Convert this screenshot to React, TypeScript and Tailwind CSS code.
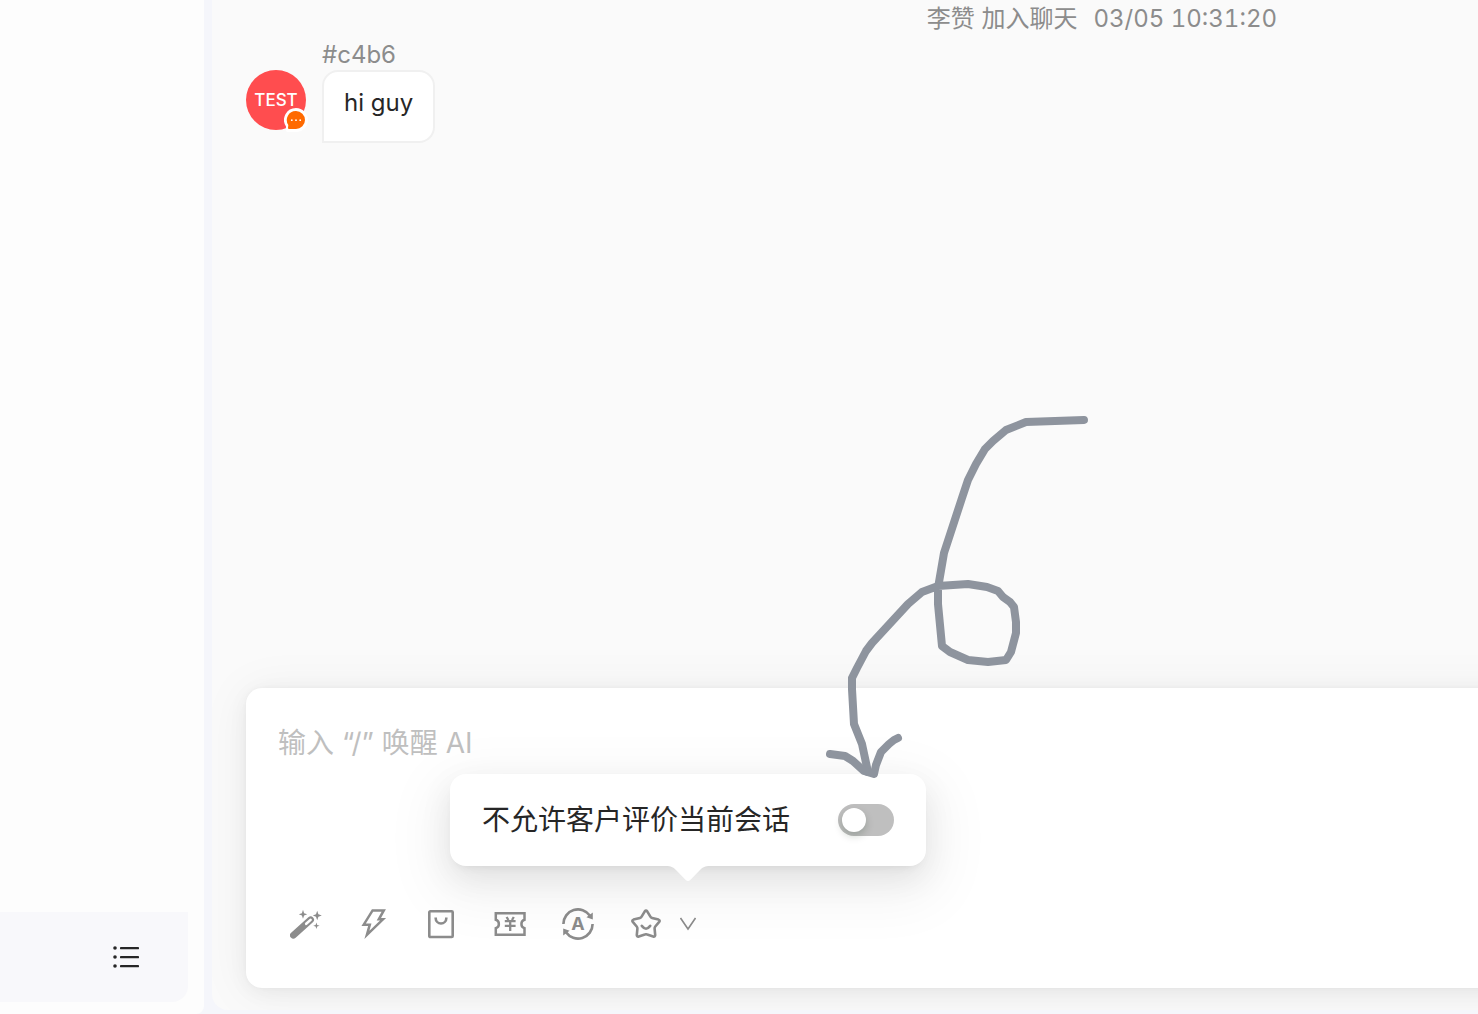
import { useState, type ReactNode } from "react";

interface IconProps {
  className?: string;
}

export default function App() {
  return (
    <div className="flex min-h-screen overflow-hidden bg-[#f5f6fb] font-['Inter','Noto_Sans_CJK_SC',sans-serif]">
      <Sidebar />
      <main className="relative mb-1 ml-2 flex min-w-0 flex-1 flex-col overflow-hidden rounded-bl-2xl bg-[#fafafa] pb-[22px] pl-[34px]">
        <SystemNotice text="李赞 加入聊天" time="03/05 10:31:20" />
        <Message author="#c4b6" avatar="TEST" text="hi guy" />
        <Composer />
      </main>
    </div>
  );
}

function Sidebar() {
  return (
    <aside className="flex w-[204px] shrink-0 flex-col justify-end rounded-br-lg bg-[#fdfdfd] pr-4 pb-3">
      <div className="flex h-[90px] items-center justify-end rounded-br-2xl bg-[#f8f8fb] pr-12">
        <button type="button" aria-label="List">
          <ListIcon />
        </button>
      </div>
    </aside>
  );
}

function SystemNotice({ text, time }: { text: string; time: string }) {
  return (
    <p className="flex justify-end gap-4 pr-[201px] text-2xl leading-[38px] text-[#8c8c8c]">
      <span>{text}</span>
      <time className="tabular-nums">{time}</time>
    </p>
  );
}

function Message({ author, avatar, text }: { author: string; avatar: string; text: string }) {
  return (
    <article className="flex items-start gap-4 pt-0.5">
      <div className="relative mt-[30px] flex size-[60px] shrink-0 items-center justify-center rounded-full bg-[#ff4d4f] pt-0.5 text-[17px] font-medium text-white">
        {avatar}
        <ChannelBadge className="absolute -right-0.5 -bottom-0.5" />
      </div>
      <div>
        <p className="text-2xl leading-[30px] text-[#8c8c8c]">{author}</p>
        <div className="w-fit rounded-2xl rounded-bl-none border-2 border-[#f0f0f0] bg-white px-5 pt-[14px] pb-[22px] text-2xl leading-[33px] text-[#262626]">
          {text}
        </div>
      </div>
    </article>
  );
}

function Composer() {
  return (
    <section className="mt-auto -mr-12 flex h-[300px] flex-col rounded-2xl bg-white px-8 pt-8 pb-12 shadow-[0_0_4px_0_rgba(0,0,0,0.03),0_4px_20px_0_rgba(0,0,0,0.05),0_4px_48px_4px_rgba(0,0,0,0.05)]">
      <textarea
        aria-label="消息"
        placeholder="输入 “/” 唤醒 AI"
        className="min-h-0 flex-1 resize-none bg-transparent text-[28px] leading-[46px] outline-none placeholder:text-[#bfbfbf]"
      />
      <div className="flex items-center gap-9 pl-3 text-[#8c8c8c]">
        <Tool label="AI"><WandIcon /></Tool>
        <Tool label="快捷回复"><BoltIcon /></Tool>
        <Tool label="商品"><BagIcon /></Tool>
        <Tool label="优惠券"><CouponIcon /></Tool>
        <Tool label="翻译"><TranslateIcon /></Tool>
        <div className="flex items-center gap-[18px]">
          <Tool label="评价"><StarIcon /></Tool>
          <div className="relative">
            <Tool label="展开"><ChevronIcon /></Tool>
            <RatingPopover />
          </div>
        </div>
      </div>
    </section>
  );
}

function Tool({ label, children }: { label: string; children: ReactNode }) {
  return (
    <button type="button" aria-label={label} className="block">
      {children}
    </button>
  );
}

function RatingPopover() {
  const [blocked, setBlocked] = useState(false);

  return (
    <div className="absolute bottom-[74px] left-1/2 -translate-x-1/2">
      <label className="flex h-[92px] items-center gap-12 rounded-2xl bg-white px-8 text-[28px] whitespace-nowrap text-[#262626] shadow-[0_6px_12px_-8px_rgba(0,0,0,0.12),0_12px_32px_0_rgba(0,0,0,0.08),0_18px_56px_16px_rgba(0,0,0,0.05)]">
        不允许客户评价当前会话
        <input
          type="checkbox"
          role="switch"
          checked={blocked}
          onChange={(e) => setBlocked(e.target.checked)}
          className="h-8 w-14 shrink-0 appearance-none rounded-full bg-[#bfbfbf] p-1 before:block before:size-6 before:rounded-full before:bg-white before:shadow-[0_4px_8px_rgba(0,35,11,0.2)] before:transition-transform checked:bg-[#1890ff] checked:before:translate-x-6"
        />
      </label>
      <svg width="44" height="16" viewBox="0 0 44 16" className="absolute top-full left-1/2 -translate-x-1/2" fill="#fff">
        <path d="M0 0C5 0 7 1 10 4L19.5 13.8Q22 16.4 24.5 13.8L34 4C37 1 39 0 44 0Z" />
      </svg>
      <PenArrow className="pointer-events-none absolute -right-[166px] bottom-[84px]" />
    </div>
  );
}

/** Freehand looped arrow that points at the switch. */
function PenArrow({ className }: IconProps) {
  return (
    <svg
      width="270"
      height="370"
      viewBox="822 412 270 370"
      className={className}
      fill="none"
      stroke="#8e949e"
      strokeWidth="8"
      strokeLinecap="round"
      strokeLinejoin="round"
    >
      <path d="M1084 420L1026 422L1006 430L993 441L985 449L976 464L968 480L962 498L944 553L938 588L938 604L942 646L950 652L968 660L988 662L1006 660L1011 652L1016 633L1016 622L1014 607L1010 602L1003 597L998 591L987 587L968 584L938 586L922 592L908 604L872 643L866 651L857 668L852 678L852 689L854 724L862 744L868 772" />
      <path d="M830 754L845 756L853 761L864 771L874 774L876 765L881 752L889 744L894 740L898 738" />
    </svg>
  );
}

function ListIcon() {
  return (
    <svg width="28" height="24" viewBox="0 0 28 24" fill="#262626" className="block">
      {[3, 12, 21].map((y) => (
        <g key={y}>
          <circle cx="3" cy={y} r="1.8" />
          <rect x="8" y={y - 1} width="19" height="2.2" rx="0.4" />
        </g>
      ))}
    </svg>
  );
}

function ChannelBadge({ className }: IconProps) {
  return (
    <svg width="24" height="24" viewBox="0 0 24 24" className={className}>
      <path d="M12 0A12 12 0 1 1 12 24H4Q1.5 24 1.8 21.5L2 18.6A12 12 0 0 1 12 0Z" fill="#fff" />
      <path d="M12 3A9 9 0 1 1 12 21H5Q4 21 4 20L4.3 17A9 9 0 0 1 12 3Z" fill="#ff6a00" />
      <g fill="#fff">
        <circle cx="7.8" cy="12.2" r="0.9" />
        <circle cx="12" cy="12.2" r="0.9" />
        <circle cx="16.2" cy="12.2" r="0.9" />
      </g>
    </svg>
  );
}

function WandIcon() {
  return (
    <svg width="32" height="32" viewBox="0 0 32 32" fill="currentColor">
      <path d="M3.4 27.2L20.6 11.8" stroke="currentColor" strokeWidth="6.8" strokeLinecap="round" />
      <path d="M16.2 15.8L20.6 11.9" stroke="#fff" strokeWidth="2.6" strokeLinecap="round" />
      <path d="M13 1.8L14.1 5.2L17.2 6.3L14.1 7.4L13 10.8L11.9 7.4L8.8 6.3L11.9 5.2Z" />
      <path d="M27.2 2.7L28.4 6.3L31.8 7.5L28.4 8.7L27.2 12.3L26 8.7L22.8 7.5L26 6.3Z" />
      <path d="M26.4 14.4L27.2 16.9L29.6 17.7L27.2 18.5L26.4 21L25.6 18.5L23.2 17.7L25.6 16.9Z" />
    </svg>
  );
}

function BoltIcon() {
  return (
    <svg width="32" height="32" viewBox="0 0 32 32" fill="none" stroke="currentColor" strokeWidth="2.5">
      <path d="M14.6 2.4H25.8L20.8 11.3H25L8.9 26.8L11.8 16.7H5.7Z" />
    </svg>
  );
}

function BagIcon() {
  return (
    <svg width="32" height="32" viewBox="0 0 32 32" fill="none" stroke="currentColor" strokeWidth="2.6">
      <rect x="3.3" y="3.3" width="23.4" height="25.7" rx="1" />
      <path d="M9.7 9.6V10.2A5.3 5.3 0 0 0 20.3 10.2V9.6" />
    </svg>
  );
}

function CouponIcon() {
  return (
    <svg width="32" height="32" viewBox="0 0 32 32" fill="none" stroke="currentColor" strokeWidth="2.5">
      <path d="M1.8 5.3H30.5V11.8C26.4 13 26.4 19 30.5 20.2V26.7H1.8V20.2C5.9 19 5.9 13 1.8 11.8V5.3Z" />
      <path d="M12.6 9L14.4 12M19.8 9L18 12M10.8 13.2H21.6M10.8 17.8H21.6M16.2 13V23" strokeWidth="2.3" />
    </svg>
  );
}

function TranslateIcon() {
  return (
    <svg width="32" height="32" viewBox="0 0 32 32" fill="none" stroke="currentColor" strokeWidth="2.6">
      <path d="M1.4 16A14.6 14.6 0 0 1 28 7.7" />
      <path d="M30.6 16A14.6 14.6 0 0 1 4 24.3" />
      <path d="M30.8 4.5V11.6L24.4 9.2ZM1.2 27.5V20.4L7.6 22.8Z" fill="currentColor" stroke="none" />
      <text x="16" y="22" textAnchor="middle" fontSize="18" fontWeight="700" fill="currentColor" stroke="none">
        A
      </text>
    </svg>
  );
}

function StarIcon() {
  return (
    <svg width="32" height="32" viewBox="0 0 32 32" fill="none" stroke="currentColor" strokeWidth="2.6" strokeLinejoin="round" strokeLinecap="round">
      <path d="M14.8 3.4Q16 1.8 17.2 3.4L20.4 8.6Q21 9.6 22.1 9.9L28.5 11.6Q30.4 12.3 29.2 13.9L25.3 18.5Q24.5 19.5 24.6 20.7L25.2 27.2Q25 29.2 23.2 28.6L17.2 26.5Q16 26 14.8 26.5L8.8 28.6Q7 29.2 6.8 27.2L7.4 20.7Q7.5 19.5 6.7 18.5L2.8 13.9Q1.6 12.3 3.5 11.6L9.9 9.9Q11 9.6 11.6 8.6Z" />
      <path d="M11.8 17.9Q16 23.5 20.2 17.9" />
    </svg>
  );
}

function ChevronIcon() {
  return (
    <svg width="16" height="32" viewBox="0 0 16 32" fill="none" stroke="currentColor" strokeWidth="1.6">
      <path d="M0.5 10L8 21L15.5 10" />
    </svg>
  );
}
